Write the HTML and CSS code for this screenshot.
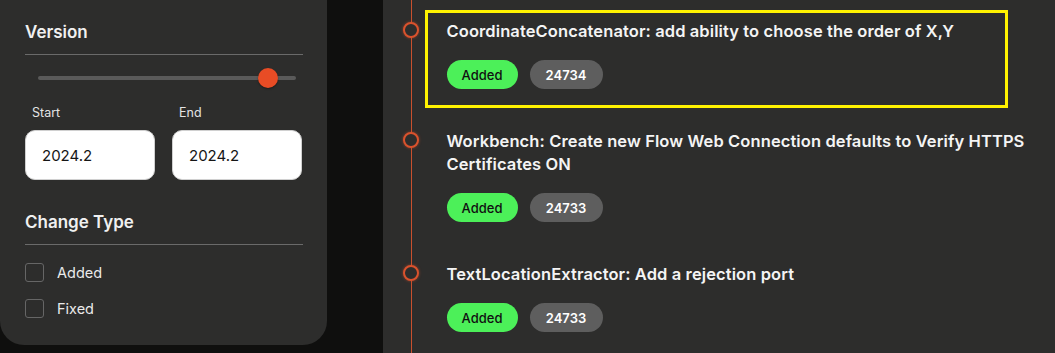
FILE: index.html
```html
<!DOCTYPE html>
<html>
<head>
<meta charset="utf-8">
<link rel="stylesheet" href="styles.css">
</head>
<body>
<div class="page">
  <aside class="sidebar">
    <h3 class="section-title">Version</h3>
    <div class="divider"></div>
    <div class="slider">
      <div class="track"></div>
      <div class="thumb"></div>
    </div>
    <div class="range-fields">
      <div class="field">
        <label class="field-label">Start</label>
        <div class="input">2024.2</div>
      </div>
      <div class="field">
        <label class="field-label">End</label>
        <div class="input">2024.2</div>
      </div>
    </div>
    <h3 class="section-title second">Change Type</h3>
    <div class="divider"></div>
    <div class="checks">
      <div class="check"><span class="box"></span><span>Added</span></div>
      <div class="check"><span class="box"></span><span>Fixed</span></div>
    </div>
  </aside>
  <main class="main">
    <div class="timeline">
      <div class="item highlight">
        <div class="title">CoordinateConcatenator: add ability to choose the order of X,Y</div>
        <div class="badges"><span class="badge added">Added</span><span class="badge num">24734</span></div>
      </div>
      <div class="item">
        <div class="title">Workbench: Create new Flow Web Connection defaults to Verify HTTPS Certificates ON</div>
        <div class="badges"><span class="badge added">Added</span><span class="badge num">24733</span></div>
      </div>
      <div class="item">
        <div class="title">TextLocationExtractor: Add a rejection port</div>
        <div class="badges"><span class="badge added">Added</span><span class="badge num">24733</span></div>
      </div>
    </div>
  </main>
</div>
</body>
</html>
```
FILE: styles.css
```css
* { box-sizing: border-box; }
html, body {
  margin: 0;
  padding: 0;
  background: #0f0f0e;
  font-family: Inter, "Liberation Sans", sans-serif;
  color: #f2f2f2;
}
.page {
  display: flex;
  gap: 56px;
  height: 353px;
  overflow: hidden;
}
.sidebar {
  width: 327px;
  height: 345px;
  flex: none;
  background: #2d2d2c;
  border-radius: 0 0 24px 24px;
  padding: 22px 24px 0 25px;
}
.section-title {
  margin: 0;
  font-size: 17px;
  line-height: 20px;
  font-weight: 600;
  color: #f0f0f0;
}
.section-title.second { margin-top: 32px; }
.divider {
  height: 1px;
  background: #6a6a6a;
  margin-top: 12px;
}
.slider {
  position: relative;
  margin: 13px 7px 0 13px;
  height: 20px;
  display: flex;
  align-items: center;
}
.track {
  flex: 1;
  height: 4px;
  border-radius: 2px;
  background: #5a5a5a;
}
.thumb {
  position: absolute;
  left: 220px;
  top: 0;
  width: 20px;
  height: 20px;
  border-radius: 50%;
  background: #e84c25;
  box-shadow: 0 1px 2px rgba(0,0,0,0.4);
}
.range-fields {
  display: flex;
  gap: 17px;
  margin-top: 17px;
  width: 277px;
}
.field { width: 130px; }
.field-label {
  display: block;
  font-size: 12.5px;
  line-height: 16px;
  color: #e4e4e4;
  padding-left: 7px;
  margin-bottom: 9px;
}
.input {
  height: 50px;
  border-radius: 10px;
  background: #fff;
  border: 1px solid #d0d0d0;
  color: #161616;
  font-size: 15px;
  padding-left: 16px;
  display: flex;
  align-items: center;
}
.checks {
  margin-top: 18px;
  display: flex;
  flex-direction: column;
  gap: 17px;
}
.check {
  display: flex;
  align-items: center;
  gap: 13px;
  font-size: 14.5px;
  color: #eaeaea;
  height: 19px;
}
.box {
  width: 19px;
  height: 19px;
  border: 1px solid #666;
  border-radius: 3px;
}
.main {
  flex: 1;
  background: #2d2d2c;
}
.timeline {
  margin-left: 28px;
  border-left: 1.5px solid #c9502e;
  min-height: 353px;
  padding: 10px 0 0 12.5px;
  display: flex;
  flex-direction: column;
  gap: 12px;
}
.item {
  position: relative;
  border: 3px solid transparent;
  padding: 7px 0 16px 19px;
}
.item::before {
  content: "";
  position: absolute;
  left: -25px;
  top: 9px;
  width: 12px;
  height: 12px;
  border-radius: 50%;
  border: 2px solid #d9522d;
  background: #2d2d2c;
  box-shadow: 0 0 3px rgba(217, 82, 45, 0.6);
}
.highlight::after {
  content: "";
  position: absolute;
  left: -3px;
  top: -3px;
  width: 583px;
  height: 98px;
  border: 3px solid #fff200;
  box-sizing: border-box;
  pointer-events: none;
}
.title {
  font-size: 16.5px;
  line-height: 23px;
  font-weight: 600;
  letter-spacing: 0.1px;
  color: #f4f4f4;
}
.badges {
  display: flex;
  gap: 12px;
  margin-top: 17px;
}
.badge {
  height: 29px;
  border-radius: 15px;
  font-size: 13px;
  display: flex;
  align-items: center;
  justify-content: center;
}
.badge.added {
  width: 71px;
  background: #4cf059;
  color: #111;
  font-weight: 500;
}
.badge.num {
  width: 73px;
  background: #5e5e5e;
  color: #fff;
  font-weight: 600;
}
```
